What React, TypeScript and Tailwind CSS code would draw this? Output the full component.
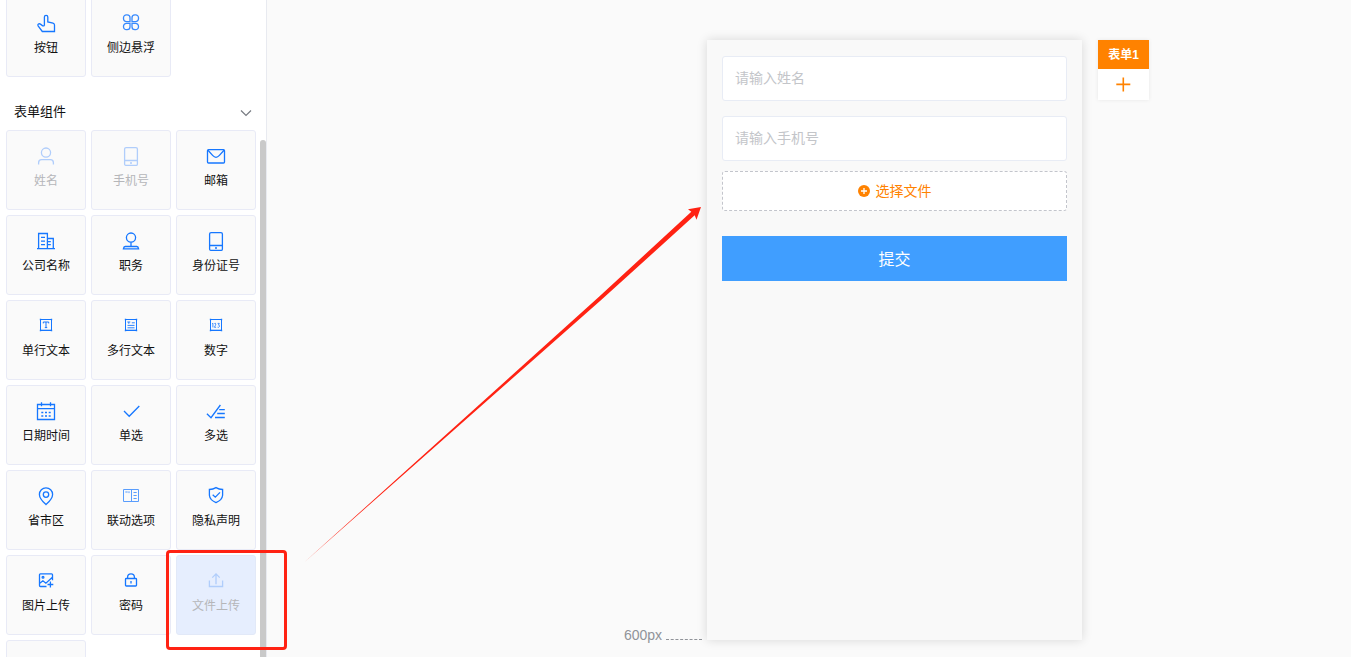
import type { ReactNode } from "react";

type Widget = {
  name: string;
  icon: ReactNode;
  used?: boolean;
  active?: boolean;
};

const phone = (
  <>
    <rect x="3.6" y="1.6" width="12.8" height="17.8" rx="1.5" />
    <path d="M3.5 14.5h13M9 17h2" />
  </>
);

// square frame with small nodes on the corners
const frame = (
  <>
    <path d="M5 13.8h10" opacity="0.35" />
    <path d="M4.5 3.5h11v11h-11z" strokeWidth="1" />
    <path d="M3.8 3.5h1.4M14.8 3.5h1.4M3.8 14.5h1.4M14.8 14.5h1.4" strokeWidth="1.4" />
  </>
);

const basicWidgets: Widget[] = [
  {
    name: "按钮",
    icon: (
      <path d="M8.4 12.8V4a1.7 1.7 0 0 1 3.4 0v5l5.2 1.2q1.5.4 1.5 1.9v6.4H6.3l-4.2-5.6c-.9-1.4.9-2.8 2.3-1.8l2.3 1.7h1.7" />
    ),
  },
  {
    name: "侧边悬浮",
    icon: (
      <g opacity="0.85">
        <path d="M9 8.6H5.5A2.9 2.9 0 0 1 2.5 5.6v-.9A2.9 2.9 0 0 1 5.5 1.8h.6A2.9 2.9 0 0 1 9 4.7z" />
        <path d="M11 8.6h3.5a2.9 2.9 0 0 0 3-3v-.9a2.9 2.9 0 0 0-3-2.9h-.6A2.9 2.9 0 0 0 11 4.7z" />
        <path d="M9 10.4H5.5a2.9 2.9 0 0 0-3 3v.4a2.9 2.9 0 0 0 3 2.9h.6A2.9 2.9 0 0 0 9 13.8z" />
        <path d="M11 10.4h3.5a2.9 2.9 0 0 1 3 3v.4a2.9 2.9 0 0 1-3 2.9h-.6a2.9 2.9 0 0 1-2.9-2.9z" />
      </g>
    ),
  },
];

const formWidgets: Widget[] = [
  {
    name: "姓名",
    used: true,
    icon: (
      <>
        <circle cx="10" cy="6.6" r="4.6" />
        <path d="M2.6 18.5v-1.8q0-3 3-3h8.8q3 0 3 3v1.8" />
      </>
    ),
  },
  { name: "手机号", used: true, icon: phone },
  {
    name: "邮箱",
    icon: (
      <>
        <rect x="1.5" y="3.7" width="17" height="13.3" rx="1" />
        <path d="M2 4.2l4.6 5.2q3.4 3.8 6.8 0L18 4.2" />
      </>
    ),
  },
  {
    name: "公司名称",
    icon: (
      <path d="M1 17.6h18M2.6 17.5v-15h8.8v15M11.5 7.5h5.8v10M5 6.3h4M5 10.1h4M5 13.7h4M11.5 10.7h3.3M11.5 13.7h3.3" />
    ),
  },
  {
    name: "职务",
    icon: (
      <>
        <circle cx="10" cy="6.6" r="4.6" />
        <path d="M10 11.2v4.2M4.2 15.5h11.6q1.5 0 1.8 2.3H2.4q.3-2.3 1.8-2.3z" />
      </>
    ),
  },
  { name: "身份证号", icon: phone },
  {
    name: "单行文本",
    icon: (
      <>
        {frame}
        <path d="M7.3 7.4V6h5.4v1.4M10 6v5.6M8.8 11.6h2.4" strokeWidth="1" />
      </>
    ),
  },
  {
    name: "多行文本",
    icon: (
      <>
        {frame}
        <path d="M6.3 6h3M7.8 6v1.8M10.8 6.8h3M6.5 9.4h7M6.5 11.8h7" strokeWidth="0.9" />
      </>
    ),
  },
  {
    name: "数字",
    icon: (
      <>
        {frame}
        <path
          strokeWidth="0.8"
          d="M6.1 7.8l.8-.6v4.2M8.4 7.5q1.4-.7 1.4.6 0 .8-1.4 3.2h1.7M11.6 7.4h1.7l-.8 1.7q1.3.1 1 1.4-.5 1.2-1.9.7"
        />
      </>
    ),
  },
  {
    name: "日期时间",
    icon: (
      <>
        <path d="M1.5 3.5h17v15h-17zM1.5 7.7h17M5.5 1.3v4M14.5 1.3v4" />
        <path d="M5.3 11.5h2M9 11.5h2M12.7 11.5h2M5.3 15h2M9 15h2M12.7 15h2" strokeWidth="1.5" />
      </>
    ),
  },
  { name: "单选", icon: <path d="M3 10l5.2 5.3L18.3 5" /> },
  {
    name: "多选",
    icon: <path d="M.9 12.8L5 16.7 14.4 4M13.2 8.6h5.6M11.2 12.5h7.6M9 16.5h9.8" />,
  },
  {
    name: "省市区",
    icon: (
      <>
        <path d="M10 18.6Q3.4 12.6 3.4 8.4a6.6 6.6 0 0 1 13.2 0q0 4.2-6.6 10.2z" />
        <circle cx="10" cy="8.6" r="2.7" />
      </>
    ),
  },
  {
    name: "联动选项",
    icon: (
      <g opacity="0.7" strokeWidth="1">
        <path d="M2.5 3.5h15v12h-15zM10.5 3.5v12" />
        <path d="M4.3 6h2.4M8 5.3v1.8M12.5 6.5h3.2M12.5 9.5h3.2M12.5 12.5h3.2" />
      </g>
    ),
  },
  {
    name: "隐私声明",
    icon: (
      <path d="M10 1.6q3 1.8 6.6 1.9v5.8q-.4 4.8-6.6 7.3-6.2-2.5-6.6-7.3V3.5Q7 3.4 10 1.6zM6.7 8.7l2.6 2.5L14 6.4" />
    ),
  },
  {
    name: "图片上传",
    icon: (
      <>
        <path d="M10.5 15.5H4.4q-.9 0-.9-.9V3.8q0-.9.9-.9h11.2q.9 0 .9.9v5.4M3.5 12.5l3.4-2.7 3 2.4 6.5-5.9M14.4 10.6v5.8M11.5 13.5h5.8" />
        <circle cx="7" cy="6.3" r="0.9" />
      </>
    ),
  },
  {
    name: "密码",
    icon: (
      <>
        <rect x="4.5" y="7.5" width="11" height="7.5" rx="0.8" />
        <path d="M6.6 7.4V6.2a3.4 3.4 0 0 1 6.8 0v1.2M10 10.1v2.4" />
      </>
    ),
  },
  {
    name: "文件上传",
    used: true,
    active: true,
    icon: <path d="M3.4 9.5v6h13.2v-6M10 13.2V3M6.3 6.6L10 2.9l3.7 3.7" />,
  },
];

function WidgetCard({ name, icon, used, active }: Widget) {
  return (
    <button
      type="button"
      disabled={used}
      className={`flex flex-col items-center h-20 pt-[15px] border rounded-[3px] text-xs leading-5 ${
        active ? "bg-[#e6eefe] border-[#e2e9f8]" : "bg-[#fafafa] border-[#e8eaf6]"
      } ${used ? "text-[#b5b6b9]" : "text-[#111]"}`}
    >
      <svg
        viewBox="0 0 20 20"
        fill="none"
        stroke="currentColor"
        strokeWidth="1.3"
        className={`w-5 h-5 mb-[5px] ${used ? "text-[#b0cdfb]" : "text-[#1677ff]"}`}
      >
        {icon}
      </svg>
      <span>{name}</span>
    </button>
  );
}

function Sidebar() {
  return (
    <aside className="relative w-[267px] shrink-0 h-full overflow-hidden bg-white border-r border-[#e8eaf0]">
      <div className="-mt-[3px] px-1.5">
        <div className="grid grid-cols-[repeat(3,80px)] gap-[5px]">
          {basicWidgets.map((item) => (
            <WidgetCard key={item.name} {...item} />
          ))}
        </div>
        <button
          type="button"
          className="flex items-center justify-between w-full h-[53px] pt-4 px-2 text-[13px] text-[#111]"
        >
          <span>表单组件</span>
          <svg viewBox="0 0 12 12" fill="none" stroke="#777b82" strokeWidth="1.2" className="w-3 h-3 mt-0.5">
            <path d="M1 3.5l5 5 5-5" />
          </svg>
        </button>
        <div className="grid grid-cols-[repeat(3,80px)] gap-[5px]">
          {formWidgets.map((item) => (
            <WidgetCard key={item.name} {...item} />
          ))}
          <div className="h-20 border border-[#e8eaf6] rounded-[3px] bg-[#fafafa]"></div>
        </div>
      </div>
      <div className="absolute top-[140px] bottom-0 right-0 w-1.5 rounded-t-full bg-[#c9c9c9]"></div>
    </aside>
  );
}

function FormPage() {
  return (
    <form className="w-[375px] h-[600px] px-[15px] py-4 bg-[#f9f9f9] shadow-[0_0_10px_rgba(0,0,0,0.14)]">
      <div className="flex flex-col gap-[15px]">
        <input
          type="text"
          aria-label="请输入姓名"
          placeholder="请输入姓名"
          className="w-full h-[45px] px-3 pb-0.5 bg-white border border-[#e8ecf5] rounded-[3px] text-sm placeholder:text-[#c3c5c9]"
        />
        <input
          type="tel"
          aria-label="请输入手机号"
          placeholder="请输入手机号"
          className="w-full h-[45px] px-3 pb-0.5 bg-white border border-[#e8ecf5] rounded-[3px] text-sm placeholder:text-[#c3c5c9]"
        />
      </div>
      <button
        type="button"
        className="flex items-center justify-center gap-1.5 w-full h-10 mt-2.5 bg-white border border-dashed border-[#c3c5cc] rounded-[3px] text-sm text-[#ff8200]"
      >
        <svg viewBox="0 0 12 12" className="w-3 h-3">
          <circle cx="6" cy="6" r="6" fill="#ff8200" />
          <path d="M6 3v6M3 6h6" stroke="#fff" strokeWidth="1.3" />
        </svg>
        <span>选择文件</span>
      </button>
      <button type="submit" className="w-full h-[45px] mt-[25px] pt-0.5 bg-[#409eff] text-base text-white">
        提交
      </button>
    </form>
  );
}

export default function App() {
  return (
    <div className="relative flex h-screen overflow-hidden bg-[#fafafa] font-['Liberation_Sans','Noto_Sans_CJK_SC',sans-serif]">
      <Sidebar />
      <main className="flex flex-1 items-start justify-center pt-10 pl-[155px]">
        <div className="flex items-end">
          <div className="flex items-end gap-1 mr-[5px] text-sm leading-5 text-[#909399]">
            <span className="-mb-[5px]">600px</span>
            <span className="w-9 border-b border-dashed border-[#909399]"></span>
          </div>
          <FormPage />
        </div>
        <div className="flex flex-col w-[51px] ml-4 bg-white shadow-[0_0_4px_rgba(0,0,0,0.08)]">
          <button type="button" className="h-[29px] bg-[#ff8200] text-xs font-bold text-white">
            表单1
          </button>
          <button type="button" aria-label="+" className="flex items-center justify-center h-[31px] pb-px">
            <svg viewBox="0 0 15 15" stroke="#ff8200" strokeWidth="1.6" className="w-[15px] h-[15px]">
              <path d="M7.3 .5v14M.3 7.4h14" />
            </svg>
          </button>
        </div>
      </main>

      {/* 标注：红框和箭头 */}
      <div className="absolute left-[166px] top-[550px] w-[121px] h-[100px] border-3 border-[#ff2213] rounded-[4px] pointer-events-none"></div>
      <svg
        viewBox="0 0 400 360"
        fill="#ff2213"
        className="absolute left-[302px] top-[205px] w-[400px] h-[360px] pointer-events-none"
      >
        <path d="M2 357.5L297.3 91.5 389.3 6.8 386 4.2 399 2 394.5 14.8 392.7 10.3 299.7 94.6z" />
      </svg>
    </div>
  );
}
